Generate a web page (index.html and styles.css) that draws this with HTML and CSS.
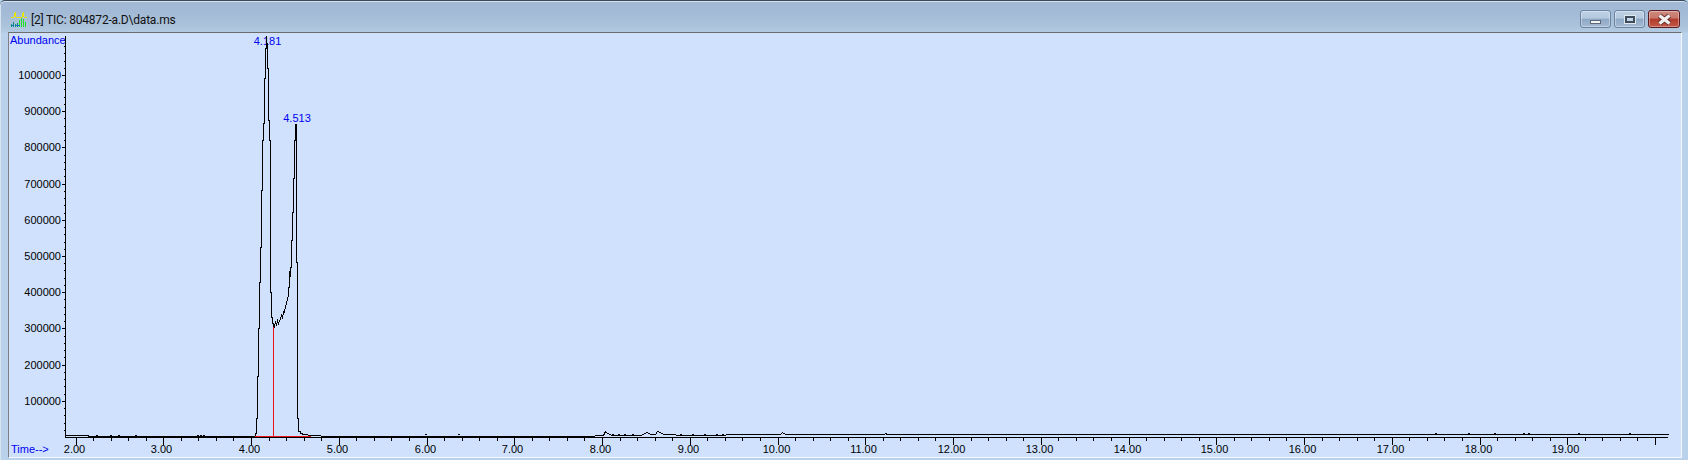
FILE: index.html
```html
<!DOCTYPE html>
<html lang="en">
<head>
<meta charset="utf-8">
<title>TIC: 804872-a.D\data.ms</title>
<link rel="stylesheet" href="styles.css">
</head>
<body>
<div class="window">
  <header class="titlebar">
    <svg class="app-icon" width="18" height="16" viewBox="0 0 18 16" shape-rendering="crispEdges" aria-hidden="true">
      <path d="M1 5.500h3M6 5.500h6M14 5.500h3M4.500 5V1M5.500 5V0M12.500 5V1M13.500 5V0" fill="none" stroke="#e6e600"/>
      <path d="M1.500 15v-3M3.500 15v-5M5.500 15v-3M7.500 15v-4" fill="none" stroke="#0a8f7f"/>
      <path d="M9.500 15v-7M11.500 15v-9M13.500 15v-8M15.500 15v-5" fill="none" stroke="#22e022"/>
      <path d="M2 13.500h2M6 13.500h4" fill="none" stroke="#1a6ad0"/>
    </svg>
    <span class="title">[2] TIC: 804872-a.D\data.ms</span>
    <div class="controls">
      <div class="btn"><span class="glyph-min"></span></div>
      <div class="btn"><span class="glyph-max"></span></div>
      <div class="btn btn-close">
        <svg width="15" height="11" viewBox="0 0 15 11" aria-hidden="true"><path d="M2.500 1.500l10 8M12.500 1.500l-10 8" stroke="#5a2a2a" stroke-width="5"/><path d="M2.500 1.500l10 8M12.500 1.500l-10 8" stroke="#f1eeee" stroke-width="3.400"/></svg>
      </div>
    </div>
  </header>
  <main class="client">
    <svg id="chart" class="chart" viewBox="9 33 1672 424" width="1672" height="424" shape-rendering="crispEdges"></svg>
  </main>
</div>
<script src="script.js"></script>
</body>
</html>
```

FILE: styles.css
```css
html, body {
  margin: 0;
  padding: 0;
  height: 100%;
  overflow: hidden;
  background: #b9d1ea;
}

.window {
  box-sizing: border-box;
  width: 1688px;
  height: 460px;
  display: flex;
  flex-direction: column;
  padding: 0 6px 2px 8px;
  border-top: 1px solid #3a4a5c;
  border-radius: 5px 5px 0 0;
  background: linear-gradient(#a3bad6 0, #a2bad5 10px, #abc2db 24px, #b3cae3 31px, #b9d1ea 32px);
  box-shadow: inset 0 1px 0 #d4e2f0, inset 1px 0 0 #d6e4f2;
}

.titlebar {
  flex: none;
  height: 31px;
  display: flex;
  align-items: flex-start;
  margin-right: 1px;
}

.app-icon {
  flex: none;
  margin: 11px 3px 0 2px;
}

.title {
  flex: 1;
  margin-top: 11px;
  font: 12px/16px Roboto, sans-serif;
  letter-spacing: -0.2px;
  color: #111;
}

.controls {
  flex: none;
  display: flex;
  gap: 3px;
  margin: 9px 1px 0 0;
}

.btn {
  box-sizing: border-box;
  width: 31px;
  height: 18px;
  display: flex;
  align-items: center;
  justify-content: center;
  border: 1px solid #6a84a2;
  border-radius: 3px;
  background: linear-gradient(#bfd1e4 0, #b4c9df 45%, #8ea8c5 50%, #a4bad3 100%);
  box-shadow: inset 0 0 0 1px rgba(255, 255, 255, 0.35);
}

.btn-close {
  width: 32px;
  border-color: #5c1a22;
  background: linear-gradient(#cf8b80 0, #c87568 45%, #b23a2a 50%, #c25846 100%);
}

.glyph-min {
  box-sizing: border-box;
  width: 11px;
  height: 4px;
  margin-top: 5px;
  background: #f2f4f6;
  border: 1px solid #5a6878;
}

.glyph-max {
  box-sizing: border-box;
  width: 10px;
  height: 7px;
  border: 2px solid #3f4c5c;
  outline: 1px solid #dfe7ef;
  background: #c6d6e8;
}

.client {
  flex: 1;
  min-height: 0;
  box-sizing: border-box;
  display: flex;
  border-top: 1px solid #6c6c6c;
  border-left: 1px solid #7f7f7f;
  border-right: 1px solid #f4f8fc;
  border-bottom: 1px solid #f4f8fc;
  background: #cfe1fd;
}

.chart {
  display: block;
  flex: none;
}

.tick {
  stroke: #000;
  stroke-width: 1;
  fill: none;
}

.trace {
  stroke: #000;
  stroke-width: 1;
  fill: none;
}

.integration {
  stroke: #e8141c;
  stroke-width: 1;
  fill: none;
}

.label {
  font: 11px "Liberation Sans", Arial, sans-serif;
  fill: #000;
}

.label-blue {
  fill: #0000f0;
}
```

FILE: script.js
```js
(function () {
  var NS = "http://www.w3.org/2000/svg";
  var svg = document.getElementById("chart");

  var AXIS_X = 65, AXIS_Y = 437, AXIS_END = 1668;
  var X0 = 75.5, X_PER_MIN = 87.75;   // pixel of 2.00 min, pixels per minute
  var Y_PER_100K = 36.2;

  function el(name, attrs, text) {
    var n = document.createElementNS(NS, name);
    for (var k in attrs) n.setAttribute(k, attrs[k]);
    if (text) n.textContent = text;
    svg.appendChild(n);
    return n;
  }
  function path(cls, d) { el("path", { "class": cls, d: d }); }
  function label(x, y, text, anchor, blue) {
    el("text", { "class": "label" + (blue ? " label-blue" : ""), x: x, y: y, "text-anchor": anchor }, text);
  }
  function line(pts) {
    return pts.map(function (p, i) {
      return (i ? "L" : "M") + (p[0] + 0.5) + " " + (p[1] + 0.5);
    }).join("");
  }

  /* axes */
  var d = "M65.5 36V437.5M65 437.5H" + AXIS_END;
  var x, y, i;

  /* time axis: major ticks each minute, minor each 0.2 */
  for (i = 0; i <= 90; i++) {
    x = Math.round(X0 + (i / 5) * X_PER_MIN) + 0.5;
    d += "M" + x + " 437V" + (i % 5 === 0 ? 445 : 441);
  }
  /* abundance axis */
  for (i = 1; i <= 54; i++) {
    y = Math.round(AXIS_Y - (i / 5) * Y_PER_100K) + 0.5;
    if (y < 37) break;
    d += "M" + (i % 5 === 0 ? 62 : 64) + " " + y + "H65";
  }
  path("tick", d);

  for (i = 2; i <= 19; i++) {
    label(Math.round(X0 + (i - 2) * X_PER_MIN) - 1.5, 453, i + ".00", "middle");
  }
  for (i = 1; i <= 10; i++) {
    label(61, Math.round(AXIS_Y - i * Y_PER_100K) + 4, String(i * 100000), "end");
  }
  label(10, 44, "Abundance", "start", true);
  label(11, 453, "Time-->", "start", true);
  label(267.5, 45, "4.181", "middle", true);
  label(297, 122, "4.513", "middle", true);

  /* TIC trace: flat start, two peaks, then slowly rising noisy baseline */
  var trace = [[65, 435], [88, 435], [88, 436], [254, 436], [255, 436], [255, 433], [256, 433], [256, 418],
    [257, 418], [257, 376], [258, 376], [258, 328], [259, 328], [259, 282], [260, 282], [260, 247],
    [261, 247], [261, 190], [262, 190], [262, 140], [263, 140], [263, 123], [264, 123], [264, 78],
    [265, 78], [265, 48], [266, 48], [266, 36], [267, 48], [267, 68], [268, 68], [268, 120], [269, 120],
    [269, 140], [270, 140], [270, 292], [271, 292], [271, 317], [272, 317], [272, 323], [273, 323],
    [273, 327], [274, 327], [275, 321], [276, 325], [277, 320], [278, 323], [280, 318], [281, 315],
    [282, 318], [283, 311], [284, 312], [285, 305], [286, 304], [287, 298], [288, 295], [288, 289],
    [289, 285], [289, 271], [290, 276], [290, 268], [291, 266], [291, 240], [292, 240], [292, 212],
    [293, 212], [293, 178], [294, 178], [294, 140], [295, 140], [295, 124], [296, 124], [296, 262],
    [297, 262], [297, 418], [298, 418], [298, 431], [300, 431], [300, 433], [304, 434], [311, 435],
    [330, 436], [560, 436], [590, 436], [600, 435], [603, 435], [605, 431], [607, 433], [612, 435],
    [640, 435], [647, 432], [650, 434], [655, 434], [657, 431], [660, 432], [663, 434], [675, 434],
    [676, 435], [775, 434], [780, 434], [782, 432], [785, 434], [872, 434], [884, 434], [885, 433],
    [887, 434], [1668, 434]];
  path("trace", line(trace));

  /* small noise dots on the baseline */
  var noise = "";
  [70, 75, 80, 96, 110, 118, 135, 197, 200, 203, 425, 458, 612, 618, 624, 632, 668, 680, 692, 704, 716, 722, 736, 1435, 1468, 1494, 1523, 1528, 1578, 1629]
    .forEach(function (nx) {
      var ny = nx < 300 ? 435 : nx < 800 ? 434 : 433;
      noise += "M" + nx + " " + (ny + 0.5) + "h2";
    });
  path("trace", noise);

  /* integration marks */
  path("integration", "M273.500 327V437M255 436.500H264");
  path("integration", "M264 436.500H311");
})();
```
